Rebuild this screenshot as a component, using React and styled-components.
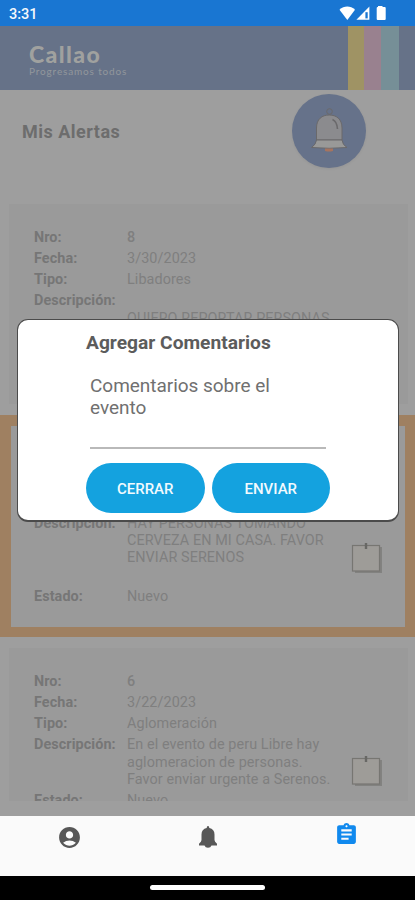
import React from 'react';
import styled, { createGlobalStyle, css } from 'styled-components';
import { MdAccountCircle, MdAssignment } from 'react-icons/md';

const GlobalStyle = createGlobalStyle`
  * {
    box-sizing: border-box;
  }
  body {
    margin: 0;
    background: #000;
    font-family: Roboto, 'Liberation Sans', sans-serif;
  }
`;

const Screen = styled.div`
  position: relative;
  display: flex;
  flex-direction: column;
  width: 415px;
  height: 900px;
  overflow: hidden;
  background: #9e9e9e;
`;

const StatusBar = styled.div`
  display: flex;
  justify-content: space-between;
  height: 26px;
  padding: 6px 27px 0 9px;
  background: #1976d2;
  color: #f4f8fc;
  font-size: 14.5px;
  line-height: 18px;
  font-weight: 500;
  svg {
    display: block;
    margin-top: -1px;
  }
`;

const Header = styled.header`
  display: flex;
  justify-content: space-between;
  height: 64px;
  padding: 0 16px 0 29px;
  background: #667288;
`;

const Brand = styled.div`
  padding-top: 16px;
  color: #a0a19f;
`;

const BrandName = styled.div`
  font-family: Lato, sans-serif;
  font-weight: 900;
  font-size: 23px;
  line-height: 24px;
  letter-spacing: 1.4px;
`;

const BrandMotto = styled.div`
  font-family: Lato, sans-serif;
  font-size: 10px;
  line-height: 10px;
  letter-spacing: 0.85px;
  color: #92979c;
`;

const Stripes = styled.div`
  display: flex;
`;

const Stripe = styled.span`
  width: ${(props) => props.$width}px;
  background: ${(props) => props.$color};
`;

const TitleRow = styled.div`
  display: flex;
  justify-content: space-between;
  height: 114px;
  padding: 4px 49px 0 22px;
`;

const Title = styled.h1`
  margin: 27px 0 0;
  font-size: 18px;
  line-height: 22px;
  font-weight: 700;
  letter-spacing: 0.5px;
  color: #6d6d6d;
`;

const BellButton = styled.div`
  width: 74px;
  height: 74px;
  border-radius: 50%;
  background: #66728a;
  box-shadow: 0 1px 3px rgba(0, 0, 0, 0.06);
  svg {
    display: block;
  }
`;

const List = styled.div`
  display: flex;
  flex-direction: column;
  height: 597px;
  overflow: hidden;
`;

const Card = styled.section`
  display: flex;
  flex: none;
  flex-direction: column;
  height: 200px;
  margin: 0 7px 11px 9px;
  padding: 24.5px 0 0 25px;
  background: #9a9a9a;
  ${(props) =>
    props.$selected &&
    css`
      height: 222px;
      margin: 0 0 11px;
      padding: 0 0 22px 23px;
      justify-content: flex-end;
      border: solid #9f8061;
      border-width: 11px 10px 10px 11px;
    `}
`;

const CardBody = styled.div`
  display: flex;
`;

const Fields = styled.div`
  display: flex;
  flex-direction: column;
  gap: 4px;
  width: 308px;
`;

const Field = styled.div`
  display: grid;
  grid-template-columns: 93px 1fr;
  font-size: 14.4px;
  line-height: 17.3px;
`;

const Label = styled.span`
  font-weight: 700;
  letter-spacing: 0.08px;
  color: #767676;
`;

const Value = styled.span`
  white-space: pre;
  color: #7f7f7f;
  font-weight: ${(props) => (props.$strong ? 500 : 400)};
  letter-spacing: 0.08px;
`;

const NoteSlot = styled.div`
  padding-top: ${(props) => props.$top}px;
  margin-left: 9px;
`;

const ListEnd = styled.div`
  height: 15px;
`;

const TabBar = styled.nav`
  display: grid;
  grid-template-columns: repeat(3, 1fr);
  height: 60px;
  background: #fafafa;
`;

const Tab = styled.div`
  display: flex;
  justify-content: center;
  padding-top: ${(props) => (props.$active ? 6 : 9)}px;
  padding-left: 1px;
  color: ${(props) => (props.$active ? '#1089ee' : '#575757')};
`;

const GestureBar = styled.div`
  display: flex;
  justify-content: center;
  height: 24px;
  padding-top: 9px;
  background: #000;
`;

const GesturePill = styled.div`
  width: 115px;
  height: 5px;
  border-radius: 3px;
  background: #fff;
`;

const Dialog = styled.div`
  position: absolute;
  left: 17px;
  top: 319px;
  width: 382px;
  height: 203px;
  padding: 13px 68px 0;
  border: 1px solid #4b4b4b;
  border-bottom-width: 2px;
  border-radius: 11px;
  background: #fff;
`;

const DialogTitle = styled.h2`
  margin: 0;
  font-size: 19.2px;
  line-height: 20px;
  font-weight: 700;
  color: #5c5c5c;
  white-space: nowrap;
`;

const CommentField = styled.div`
  height: 76px;
  margin: 20px 4px 14px;
  padding-top: 2px;
  border-bottom: 2px solid #b9b9b9;
  color: #707070;
  font-size: 19px;
  letter-spacing: -0.03px;
  line-height: 22px;
  white-space: pre;
`;

const Actions = styled.div`
  display: flex;
  gap: 7px;
`;

const PillButton = styled.button`
  flex: none;
  width: 118.5px;
  height: 50px;
  padding: 2px 0 0;
  border: 0;
  border-radius: 25px;
  background: #14a2df;
  color: #f2fafe;
  font: 500 15px Roboto, sans-serif;
`;

function StatusIcons() {
  return (
    <svg width="50" height="18" viewBox="0 0 50 18">
      <path d="M1.5 4.8C6 .4 12.5.4 17 4.8L9.3 15Z" fill="#fff" />
      <path d="M31.4 1.5v13.2H18.4Z" fill="#fff" />
      <path d="M27.4 7.2h2.3v6.2h-2.3Z" fill="#1976d2" />
      <path d="M40 2V1h4.5v1h2.2q1 0 1 1v11q0 1-1 1h-7q-1 0-1-1V3q0-1 1-1Z" fill="#fff" />
    </svg>
  );
}

function AlarmBell() {
  return (
    <svg width="74" height="74" viewBox="0 0 74 74" stroke="#6a696b" strokeWidth="1">
      <circle cx="37.5" cy="17.5" r="2.8" fill="none" />
      <path d="M24.5 46V34C24.5 25 30 21 37.2 21S50 25 50 34v12Z" fill="#8b8b8e" />
      <path d="M24.5 46H50q.5 5 5 7.5-18 1.6-35.500 0 4.500-3 5-7.500Z" fill="#999998" />
      <path d="M33 54.500h8v2.500q-4 1.200-8 0Z" fill="#a6745f" stroke="none" />
      <path d="M40.500 25.500q4.500 2 5 9.500" fill="none" strokeWidth="1.600" />
    </svg>
  );
}

function NoteIcon() {
  return (
    <svg width="32" height="34" viewBox="0 0 32 34">
      <path d="M4 31h26V6" fill="none" stroke="#828280" strokeWidth="2" />
      <rect x="1.500" y="4.500" width="27" height="25.500" fill="#9e9c98" stroke="#777672" strokeWidth="1.200" />
      <path d="M15 2v6" stroke="#686865" strokeWidth="2.400" />
    </svg>
  );
}

function TabBell() {
  return (
    <svg width="20" height="24" viewBox="0 0 20 24" fill="currentColor">
      <path d="M10 1q1.300 0 1.300 2Q16.500 4.200 16.500 9.500v5.500q0 1.800 2.500 3.700v1.800h-5.500q-.8 2.300-3.500 2.300t-3.500-2.300H1v-1.800q2.500-1.900 2.500-3.700V9.500q0-5.300 5.200-6.500Q8.700 1 10 1Z" />
    </svg>
  );
}

function AlertCard({ alert }) {
  return (
    <Card $selected={alert.selected}>
      <CardBody>
        <Fields>
          {alert.fields.map(([label, value]) => (
            <Field key={label}>
              <Label>{label}</Label>
              <Value $strong={label === 'Nro:'}>{value}</Value>
            </Field>
          ))}
        </Fields>
        {alert.noteTop && (
          <NoteSlot $top={alert.noteTop}>
            <NoteIcon />
          </NoteSlot>
        )}
      </CardBody>
    </Card>
  );
}

const alerts = [
  {
    id: 8,
    fields: [
      ['Nro:', '8'],
      ['Fecha:', '3/30/2023'],
      ['Tipo:', 'Libadores'],
      ['Descripción:', '\nQUIERO REPORTAR PERSONAS'],
    ],
  },
  {
    id: 7,
    selected: true,
    noteTop: 26,
    fields: [
      ['Descripción:', 'HAY PERSONAS TOMANDO\nCERVEZA EN MI CASA. FAVOR\nENVIAR SERENOS\n '],
      ['Estado:', 'Nuevo'],
    ],
  },
  {
    id: 6,
    noteTop: 81,
    fields: [
      ['Nro:', '6'],
      ['Fecha:', '3/22/2023'],
      ['Tipo:', 'Aglomeración'],
      ['Descripción:', 'En el evento de peru Libre hay\naglomeracion de personas.\nFavor enviar urgente a Serenos.'],
      ['Estado:', 'Nuevo'],
    ],
  },
];

export default function App() {
  return (
    <Screen>
      <GlobalStyle />
      <StatusBar>
        <span>3:31</span>
        <StatusIcons />
      </StatusBar>
      <Header>
        <Brand>
          <BrandName>Callao</BrandName>
          <BrandMotto>Progresamos todos</BrandMotto>
        </Brand>
        <Stripes>
          <Stripe $width={16} $color="#9f9364" />
          <Stripe $width={17} $color="#99818f" />
          <Stripe $width={18} $color="#768f97" />
        </Stripes>
      </Header>
      <TitleRow>
        <Title>Mis Alertas</Title>
        <BellButton>
          <AlarmBell />
        </BellButton>
      </TitleRow>
      <List>
        {alerts.map((alert) => (
          <AlertCard key={alert.id} alert={alert} />
        ))}
      </List>
      <ListEnd />
      <TabBar>
        <Tab>
          <MdAccountCircle size={25} />
        </Tab>
        <Tab>
          <TabBell />
        </Tab>
        <Tab $active>
          <MdAssignment size={25} />
        </Tab>
      </TabBar>
      <GestureBar>
        <GesturePill />
      </GestureBar>
      <Dialog>
        <DialogTitle>Agregar Comentarios</DialogTitle>
        <CommentField>{'Comentarios sobre el\nevento'}</CommentField>
        <Actions>
          <PillButton>CERRAR</PillButton>
          <PillButton>ENVIAR</PillButton>
        </Actions>
      </Dialog>
    </Screen>
  );
}
